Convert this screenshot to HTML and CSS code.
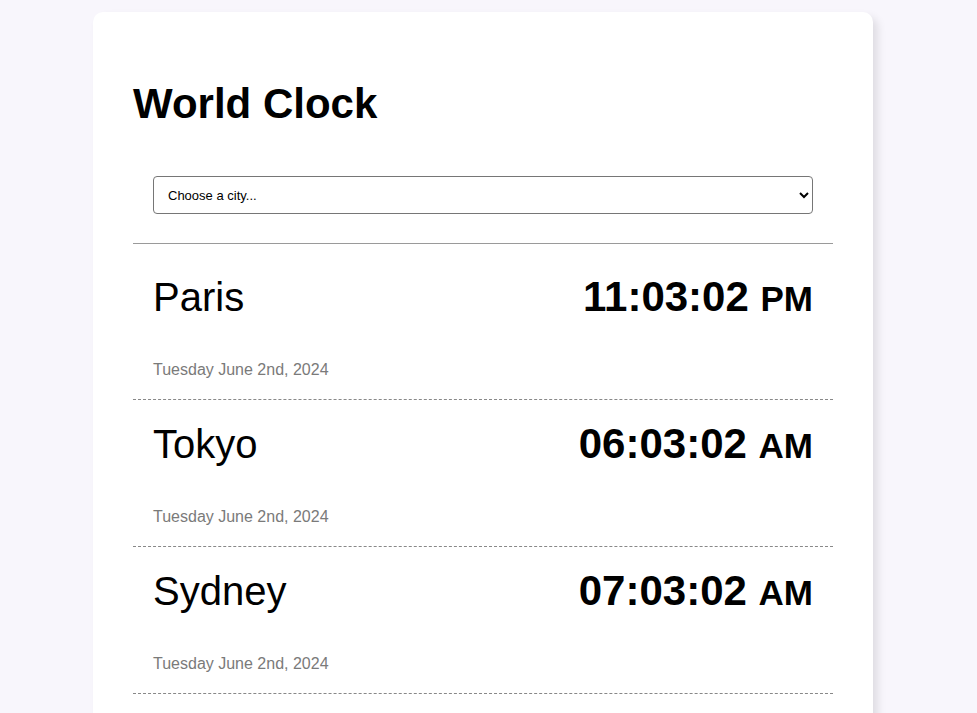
FILE: index.html
```html
<!DOCTYPE html>
<html lang="en">
<head>
<meta charset="utf-8">
<title>World Clock</title>
<link rel="stylesheet" href="styles.css">
</head>
<body>
  <div class="card">
    <h1 class="title">World Clock</h1>
    <div class="picker">
      <select class="city-select">
        <option>Choose a city...</option>
        <option>Paris</option>
        <option>Tokyo</option>
        <option>Sydney</option>
      </select>
    </div>
    <div class="divider"></div>
    <div class="cities">
      <div class="city">
        <div class="city-top">
          <h2 class="city-name">Paris</h2>
          <div class="time">11:03:02 <small>PM</small></div>
        </div>
        <div class="date">Tuesday June 2nd, 2024</div>
      </div>
      <div class="city">
        <div class="city-top">
          <h2 class="city-name">Tokyo</h2>
          <div class="time">06:03:02 <small>AM</small></div>
        </div>
        <div class="date">Tuesday June 2nd, 2024</div>
      </div>
      <div class="city">
        <div class="city-top">
          <h2 class="city-name">Sydney</h2>
          <div class="time">07:03:02 <small>AM</small></div>
        </div>
        <div class="date">Tuesday June 2nd, 2024</div>
      </div>
    </div>
  </div>
</body>
</html>
```
FILE: styles.css
```css
html, body {
  margin: 0;
  padding: 0;
}
body {
  background: #f8f6fc;
  font-family: "Liberation Sans", Arial, Helvetica, sans-serif;
  color: #000;
  padding: 12px 0 0 93px;
}
.card {
  width: 700px;
  background: #fff;
  border-radius: 10px;
  padding: 40px;
  box-shadow: 5px 5px 8px rgba(0, 0, 0, 0.1);
}
.title {
  margin: 28px 0 28px;
  font-size: 42px;
  font-weight: bold;
  line-height: 48px;
}
.picker {
  padding: 20px;
}
.city-select {
  display: block;
  width: 100%;
  height: 38px;
  padding: 0 10px;
  font-family: "Liberation Sans", Arial, sans-serif;
  font-size: 13px;
  color: #000;
  background: #fff;
  border: 1px solid #767676;
  border-radius: 4px;
}
.divider {
  margin-top: 9px;
  margin-bottom: 9px;
  border-top: 1px solid #9a9a9a;
}
.city {
  padding: 20px 20px 20px;
  border-bottom: 1px dashed #888;
}
.city-top {
  display: flex;
  justify-content: space-between;
  align-items: center;
}
.city-name {
  margin: 0;
  font-size: 40px;
  font-weight: normal;
  line-height: 46px;
}
.time {
  font-size: 42px;
  font-weight: bold;
  line-height: 48px;
}
.time small {
  font-size: 35px;
  line-height: 1;
}
.date {
  margin-top: 40px;
  font-size: 16px;
  line-height: 18px;
  color: #7a7a7a;
}
```
